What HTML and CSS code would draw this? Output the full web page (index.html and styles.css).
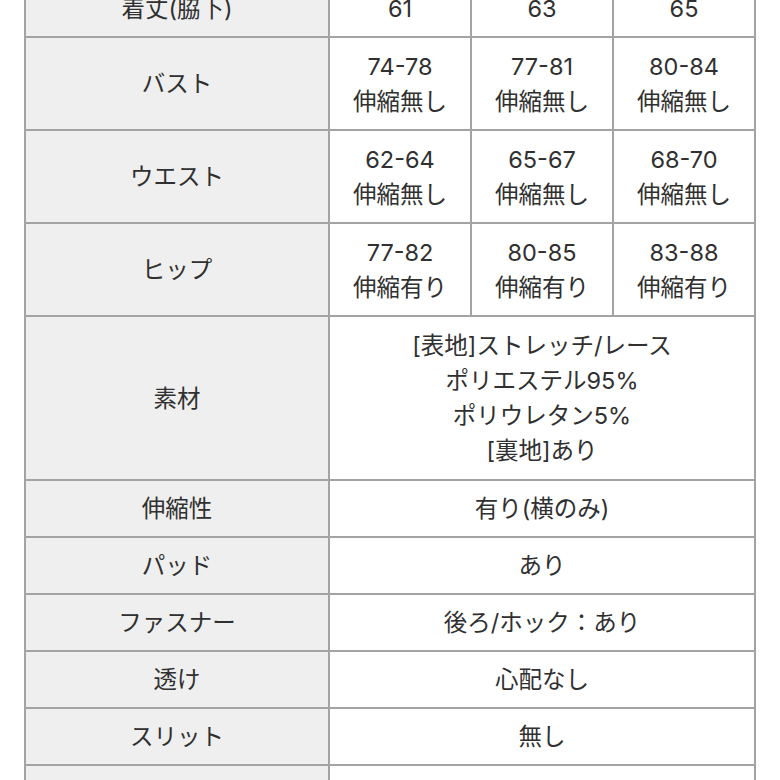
FILE: index.html
```html
<!DOCTYPE html>
<html lang="ja">
<head>
<meta charset="utf-8">
<link rel="stylesheet" href="styles.css">
</head>
<body>
<div class="wrap">
<table class="size">
<colgroup><col class="c-h"><col class="c-v"><col class="c-v"><col class="c-v"></colgroup>
<tbody>
<tr class="r1"><th>着丈(脇下)</th><td>61</td><td>63</td><td>65</td></tr>
<tr class="r2"><th>バスト</th><td>74-78<br>伸縮無し</td><td>77-81<br>伸縮無し</td><td>80-84<br>伸縮無し</td></tr>
<tr class="r2"><th>ウエスト</th><td>62-64<br>伸縮無し</td><td>65-67<br>伸縮無し</td><td>68-70<br>伸縮無し</td></tr>
<tr class="r2"><th>ヒップ</th><td>77-82<br>伸縮有り</td><td>80-85<br>伸縮有り</td><td>83-88<br>伸縮有り</td></tr>
<tr class="r4"><th>素材</th><td colspan="3">[表地]ストレッチ/レース<br>ポリエステル95%<br>ポリウレタン5%<br>[裏地]あり</td></tr>
<tr class="r1"><th>伸縮性</th><td colspan="3">有り(横のみ)</td></tr>
<tr class="r1"><th>パッド</th><td colspan="3">あり</td></tr>
<tr class="r1"><th>ファスナー</th><td colspan="3">後ろ/ホック：あり</td></tr>
<tr class="r1"><th>透け</th><td colspan="3">心配なし</td></tr>
<tr class="r1"><th>スリット</th><td colspan="3">無し</td></tr>
<tr class="r1"><th>ポケット</th><td colspan="3">無し</td></tr>
</tbody>
</table>
</div>
</body>
</html>
```
FILE: styles.css
```css
html, body {
  margin: 0;
  padding: 0;
  background: #ffffff;
}
.wrap {
  padding-left: 24px;
  margin-top: -21px;
}
.size {
  border-collapse: collapse;
  table-layout: fixed;
  width: 730px;
  font-family: "Inter", "Noto Sans CJK JP", sans-serif;
  font-size: 23.5px;
  line-height: 35px;
  color: #303030;
}
.c-h { width: 304px; }
.c-v { width: 142px; }
.size th, .size td {
  border: 2px solid #a3a3a3;
  padding: 0;
  text-align: center;
  vertical-align: middle;
  font-weight: 400;
}
.size th {
  background: #efefef;
}
.size td {
  background: #ffffff;
}
.r1 { height: 57px; }
.r2 { height: 93px; }
.r4 { height: 164px; }
```
